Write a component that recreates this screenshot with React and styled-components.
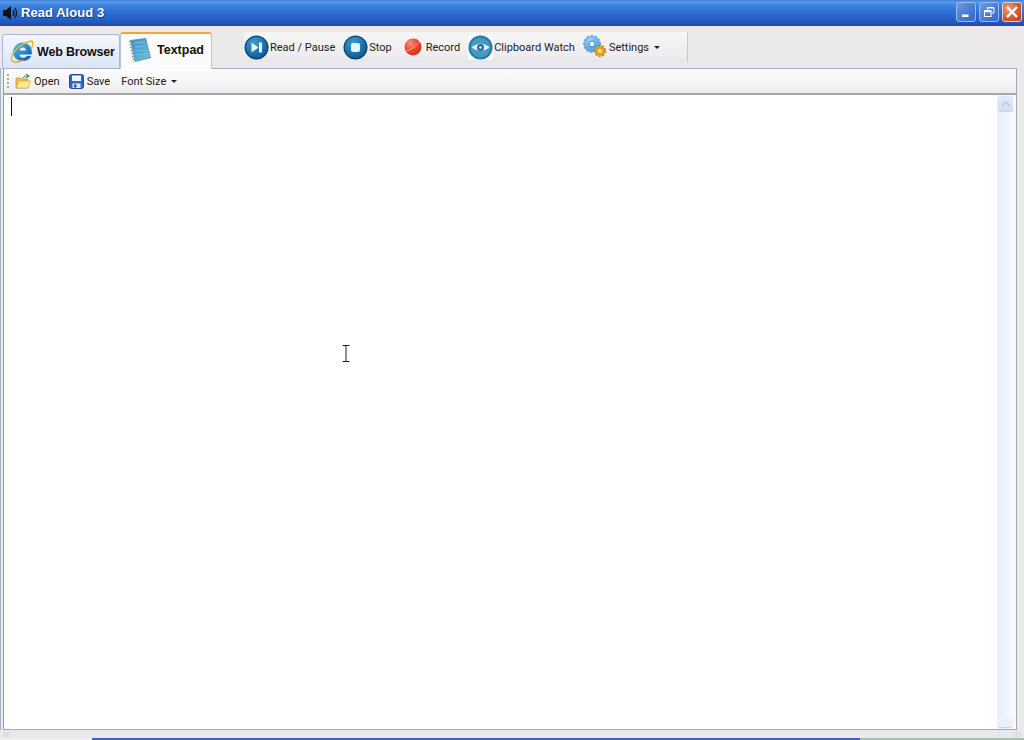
import React from "react";
import styled, { createGlobalStyle } from "styled-components";

const Global = createGlobalStyle`
  html, body { margin: 0; padding: 0; background: #ece9ea; overflow: hidden; }
  * { box-sizing: border-box; }
  svg { flex: none; }
`;

const Window = styled.div`
  position: relative; width: 1024px; height: 740px; display: flex; flex-direction: column;
  font-family: Roboto, "Open Sans", sans-serif; background: #ece9ea; overflow: hidden;
`;
const TitleBar = styled.div`
  height: 26px; flex: none; display: flex; align-items: center; padding: 0 2px 1px 2px; gap: 1px;
  background: linear-gradient(180deg, #3f7fd8 0%, #5a9be8 8%, #3a80de 22%, #2a6cd0 55%, #2258be 85%, #1d49a2 100%);
`;
const Title = styled.div`
  flex: 1; color: #fff; font: bold 13px "Liberation Sans", sans-serif; letter-spacing: .05px; text-shadow: 1px 1px 0 #123a88;
  margin-top: -1px;
`;
const WinButton = styled.div`
  width: 20px; height: 20px; margin-left: 2px; border-radius: 3px; border: 1px solid #9db9e8;
  display: flex; align-items: center; justify-content: center; margin-top: -2px;
  background: ${p => p.$close ? "radial-gradient(circle at 30% 30%, #e8a080, #d4562e 60%, #bc3c1a)" : "linear-gradient(135deg, #6f9be0, #3f74cf 70%, #3a6cc4)"};
  border-color: ${p => p.$close ? "#e8d0c8" : "#9db9e8"};
`;
const TabRow = styled.div`
  height: 42px; flex: none; display: flex; align-items: flex-end; padding-left: 2px; position: relative;
`;
const Tab = styled.div`
  display: flex; align-items: center; color: #111; white-space: nowrap;
  font: bold 12.5px "Liberation Sans", sans-serif;
  ${p => p.$active ? `
    width: 92px; height: 37px; margin-bottom: -1px; padding: 0 0 4px 8px; gap: 5px; background: #fbfbfb; border: 1px solid #b8c4dc; border-bottom: none;
    border-top: 2px solid #f4a43a; border-radius: 3px 3px 0 0; position: relative; z-index: 2;
  ` : `
    width: 118px; height: 34px; padding: 0 0 0 7px; gap: 3px; border: 1px solid #a8b8d8; border-bottom: none; border-radius: 3px 3px 0 0;
    letter-spacing: -.18px;
    background: linear-gradient(180deg, #f5f7fc, #dbe6f6);
  `}
`;
const ActionBar = styled.div`
  display: flex; align-items: center; height: 30px; width: 444px; margin-left: 32px; margin-bottom: 6px;
  background: linear-gradient(180deg, #f6f6f7, #eeeef0 75%, #e6e6ea); border-right: 1px solid #c8c8d0;
`;
const Action = styled.div`
  display: flex; align-items: center; gap: ${p => p.$gap ?? 1}px; margin-left: ${p => p.$ml ?? 0}px;
  font: 11px Roboto, sans-serif; color: #222; white-space: nowrap;
`;
const Caret = styled.span`
  display: inline-block; width: 0; height: 0; margin-left: ${p => p.$ml ?? 4}px; border: 3px solid transparent; border-top-color: #222; border-bottom: none;
`;
const PanelRow = styled.div`
  flex: 1; min-height: 0; display: flex; border-left: 1px solid #a9b6c6; padding: 0 7px 0 2px;
`;
const Panel = styled.div`
  flex: 1; display: flex; flex-direction: column; position: relative; z-index: 1;
  border: 1px solid #9fa9bf; border-top-color: #a5aec4; border-left: 1px solid #8ea0b8; background: #fff;
`;
const Toolbar = styled.div`
  height: 26px; flex: none; display: flex; align-items: center; padding-left: 3px;
  background: linear-gradient(180deg, #fdfdfd, #f3f3f3 70%, #ececec); border-bottom: 2px solid #a4a8ae;
`;
const Grip = styled.div`
  width: 2px; height: 14px; margin-right: 6px; background: repeating-linear-gradient(180deg, #a8a8a8 0 2px, transparent 2px 4px);
`;
const ToolItem = styled.div`
  display: flex; align-items: center; gap: ${p => p.$gap ?? 2}px; margin-right: ${p => p.$mr ?? 9}px; font: 11px Roboto, sans-serif; color: #222;
`;
const EditorRow = styled.div`
  flex: 1; display: flex; min-height: 0;
`;
const Editor = styled.div`
  flex: 1; position: relative; background: #fff;
`;
const TextCaret = styled.div`
  width: 1px; height: 19px; margin: 2px 0 0 7px; background: #111;
`;
const Scrollbar = styled.div`
  width: 19px; flex: none; padding: 1px 3px 1px 1px; display: flex; flex-direction: column; align-items: stretch;
  background: linear-gradient(90deg, #e8f0fb, #f8fbff);
`;
const ScrollButton = styled.div`
  height: ${p => p.$h ?? 16}px; flex: none; display: flex; align-items: center; justify-content: center; border-radius: 2px;
  background: ${p => p.$pale ? "#eaf1fa" : "linear-gradient(180deg, #e2ecf8, #d2e0f2)"}; border-bottom: 1px solid #c8d6e8;
`;
const ScrollTrack = styled.div`
  flex: 1; background: linear-gradient(90deg, #e6effb, #f0f6fd 70%, #f8fbff);
`;
const StatusBar = styled.div`
  height: 8px; flex: none; display: flex; justify-content: space-between; align-items: center; padding: 0 3px; background: #ebe8e9;
`;
const StatusGrip = styled.div`
  width: 7px; height: 5px; background: repeating-linear-gradient(90deg, #d8d8d8 0 1px, transparent 1px 2px);
`;
const BottomEdge = styled.div`
  height: 2px; flex: none;
  background: linear-gradient(90deg, #f0f0f4 0 92px, #3a62c8 92px 860px, #9cc8a8 860px 1024px);
`;
const IBeam = styled.svg`
  position: absolute; left: 342px; top: 345px; z-index: 3;
`;

const Speaker = () => (
  <svg width="18" height="16" viewBox="0 0 18 16">
    <path d="M1 5h3l5-4v14l-5-4H1z" fill="#111" />
    <path d="M11 5q2 3 0 6M13 3q3 5 0 10" fill="none" stroke="#111" strokeWidth="1.3" />
  </svg>
);
const IEIcon = () => (
  <svg width="24" height="24" viewBox="0 0 24 24">
    <defs><linearGradient id="ie" x1="0" y1="0" x2="1" y2="1"><stop offset="0" stopColor="#50c8f4" /><stop offset="1" stopColor="#0a4ea0" /></linearGradient></defs>
    <path d="M12 2.500a9.500 9.500 0 0 1 9.500 12H9.500c.2 3.500 5 4.500 7.500 1.500h4.300C17.500 24 3 22 3 12a9.500 9.500 0 0 1 9-9.500zM9.500 10.500h6.500c0-4-6-4-6.500 0z" fill="url(#ie)" fillRule="evenodd" />
    <path d="M2 21C-1 15 10 3 22 1c2 2 0 6-1 8" fill="none" stroke="#f0b020" strokeWidth="1.400" />
    <path d="M2 21c3 2 8 1 11-1" fill="none" stroke="#e8a020" strokeWidth="1.400" />
  </svg>
);
const PadIcon = () => (
  <svg width="23" height="26" viewBox="0 0 23 26">
    <defs><linearGradient id="pad" x1="0" y1="0" x2="1" y2="1"><stop offset="0" stopColor="#3f8ed4" /><stop offset=".6" stopColor="#58acd8" /><stop offset="1" stopColor="#7cc8b0" /></linearGradient></defs>
    <path d="M1 3l16-2 5 20-16 4z" fill="#6c8cc0" />
    <path d="M2 4l15-2 4 18-15 4z" fill="url(#pad)" />
    <path d="M5 6l11-1M6 10l11-1M6 14l12-1M7 18l12-2" stroke="#78bce0" strokeWidth="1" />
    <path d="M1 4l4 21" stroke="#88a070" strokeWidth="2" strokeDasharray="1.500 1.500" />
  </svg>
);
const RoundIcon = ({ children }) => (
  <svg width="25" height="25" viewBox="0 0 25 25">
    <defs><radialGradient id="rb" cx=".4" cy=".3" r=".8"><stop offset="0" stopColor="#3f9ad0" /><stop offset=".7" stopColor="#10689f" /><stop offset="1" stopColor="#0a4a80" /></radialGradient></defs>
    <circle cx="12.500" cy="12.500" r="12" fill="url(#rb)" />
    <circle cx="12.500" cy="12.500" r="11.300" fill="none" stroke="#0c2f58" strokeWidth=".8" />
    {children}
  </svg>
);
const PlayGlyph = () => (<g fill="#e8f4fc"><path d="M7.500 7.500l7 5-7 5z" /><rect x="15" y="7.500" width="3" height="10" /></g>);
const StopGlyph = () => <rect x="8" y="8" width="9" height="9" rx="2" fill="#e8f4fc" />;
const RecordIcon = () => (
  <svg width="18" height="18" viewBox="0 0 18 18">
    <defs><radialGradient id="rec" cx=".35" cy=".3" r=".8"><stop offset="0" stopColor="#f89080" /><stop offset=".5" stopColor="#f04a30" /><stop offset="1" stopColor="#c82a18" /></radialGradient></defs>
    <circle cx="9" cy="9" r="8.500" fill="url(#rec)" />
    <path d="M2 13Q9 12 15 4" fill="none" stroke="#fcc0a8" strokeWidth="1" opacity=".7" />
  </svg>
);
const EyeIcon = () => (
  <svg width="25" height="25" viewBox="0 0 25 25">
    <rect width="25" height="25" fill="#fbfbfc" />
    <circle cx="12.500" cy="12.500" r="12" fill="#1c7cac" />
    <circle cx="12.500" cy="12.500" r="10" fill="#4a98c0" />
    <path d="M3.500 12.500q9-7.500 18 0q-9 7-18 0z" fill="#e6f2f8" />
    <circle cx="12.500" cy="12.500" r="3.500" fill="#1b6da0" />
    <circle cx="12.500" cy="12.500" r="1.300" fill="#e6f2f8" />
  </svg>
);
const GearIcon = () => (
  <svg width="26" height="24" viewBox="0 0 26 24">
    <defs><radialGradient id="gb" cx=".4" cy=".3" r=".8"><stop offset="0" stopColor="#a0d8f4" /><stop offset="1" stopColor="#3a90d8" /></radialGradient></defs>
    <circle cx="10" cy="9" r="8" fill="url(#gb)" stroke="#6aaae0" strokeWidth="2" strokeDasharray="2.500 1.500" />
    <circle cx="10" cy="9" r="3" fill="#e6f4fc" stroke="#3a80c8" />
    <circle cx="18" cy="16" r="5" fill="#e0a828" stroke="#c88c18" strokeWidth="2.500" strokeDasharray="2 1.500" />
    <circle cx="18" cy="16" r="1.800" fill="#fbe8a0" />
  </svg>
);
const FolderIcon = () => (
  <svg width="17" height="15" viewBox="0 0 17 15">
    <path d="M1 4h5l1 1h6v9H1z" fill="#e8c050" stroke="#b08a30" strokeWidth=".6" />
    <path d="M1 14l3-7h12l-3 7z" fill="#fde98c" stroke="#c8a040" strokeWidth=".6" />
    <path d="M8 4q2-3 5-2M11 0l3 2-3 2" fill="none" stroke="#3ca050" strokeWidth="1.200" />
  </svg>
);
const SaveIcon = () => (
  <svg width="15" height="15" viewBox="0 0 15 15">
    <rect x=".5" y=".5" width="14" height="14" rx="2" fill="#2a68c8" stroke="#1c4c9c" />
    <rect x="3" y="1.500" width="9" height="5.500" fill="#eef4fc" />
    <rect x="3.500" y="9.500" width="8" height="4.500" fill="#e8e8f0" />
    <rect x="5" y="10.500" width="2.500" height="3" fill="#2a4c88" />
  </svg>
);
const MinGlyph = () => <svg width="12" height="12" viewBox="0 0 12 12"><rect x="2" y="8.500" width="6.500" height="2.500" fill="#fff" /></svg>;
const RestoreGlyph = () => (
  <svg width="12" height="12" viewBox="0 0 12 12" fill="none" stroke="#fff" strokeWidth="1">
    <rect x="1.500" y="4.500" width="6.500" height="6" /><path d="M1.500 5.500h6.500" strokeWidth="1.500" />
    <path d="M4.500 4V1.500h6.500V7H8.500M4.500 2h6.500" />
  </svg>
);
const CloseGlyph = () => <svg width="14" height="14" viewBox="0 0 14 14"><path d="M2 2l10 10M12 2L2 12" stroke="#fff" strokeWidth="2.400" /></svg>;

export default function App() {
  return (
    <>
      <Global />
      <Window>
        <TitleBar>
          <Speaker />
          <Title>Read Aloud 3</Title>
          <WinButton><MinGlyph /></WinButton>
          <WinButton><RestoreGlyph /></WinButton>
          <WinButton $close><CloseGlyph /></WinButton>
        </TitleBar>
        <TabRow>
          <Tab><IEIcon />Web Browser</Tab>
          <Tab $active><PadIcon />Textpad</Tab>
          <ActionBar>
            <Action><RoundIcon><PlayGlyph /></RoundIcon>Read / Pause</Action>
            <Action $ml={8}><RoundIcon><StopGlyph /></RoundIcon>Stop</Action>
            <Action $ml={12} $gap={4}><RecordIcon />Record</Action>
            <Action $ml={8}><EyeIcon />Clipboard Watch</Action>
            <Action $ml={7} $gap={1}><GearIcon />Settings<Caret /></Action>
          </ActionBar>
        </TabRow>
        <PanelRow>
          <Panel>
            <Toolbar>
              <Grip />
              <ToolItem><FolderIcon />Open</ToolItem>
              <ToolItem $gap={3} $mr={11}><SaveIcon />Save</ToolItem>
              <ToolItem>Font Size<Caret $ml={3} /></ToolItem>
            </Toolbar>
            <EditorRow>
              <Editor><TextCaret /></Editor>
              <Scrollbar>
                <ScrollButton>
                  <svg width="10" height="6" viewBox="0 0 10 6"><path d="M1 5l4-4 4 4" fill="none" stroke="#b4c6dc" strokeWidth="1.500" /></svg>
                </ScrollButton>
                <ScrollTrack />
                <ScrollButton $pale $h={9} />
              </Scrollbar>
            </EditorRow>
          </Panel>
        </PanelRow>
        <StatusBar><StatusGrip /><StatusGrip /></StatusBar>
        <BottomEdge />
        <IBeam width="9" height="18" viewBox="0 0 9 18">
          <path d="M.5.500h7M4 .500v16M.5 16.500h7" fill="none" stroke="#222" strokeWidth="1" />
        </IBeam>
      </Window>
    </>
  );
}
